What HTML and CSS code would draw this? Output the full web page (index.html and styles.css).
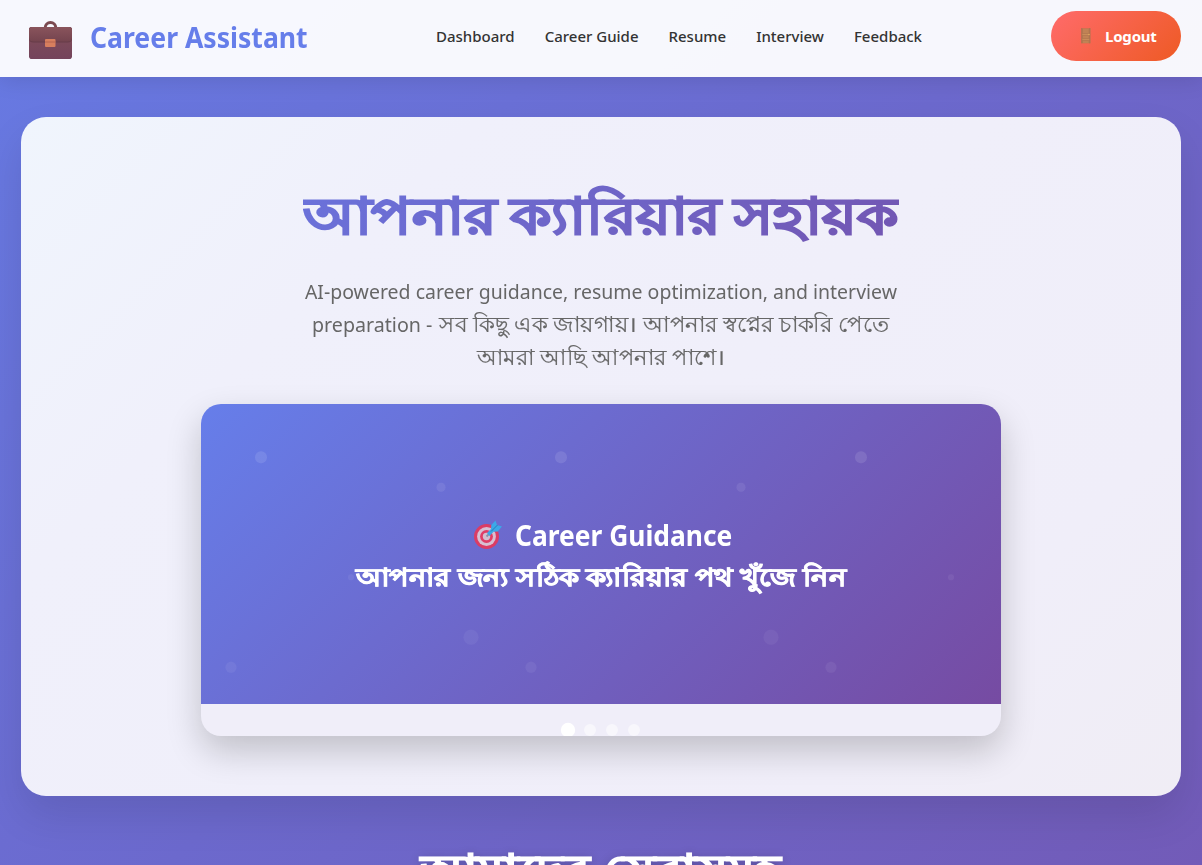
FILE: index.html
```html
<!DOCTYPE html>
<html lang="bn">
<head>
<meta charset="utf-8">
<title>Career Assistant</title>
<link rel="stylesheet" href="styles.css">
</head>
<body>
<div class="page">
  <header class="navbar">
    <div class="brand">
      <svg class="brand-icon" width="44" height="40" viewBox="0 0 44 40">
        <defs>
          <linearGradient id="flap" x1="0" y1="0" x2="0" y2="1"><stop offset="0" stop-color="#8a545c"/><stop offset="1" stop-color="#74444f"/></linearGradient>
          <linearGradient id="case" x1="0" y1="0" x2="0" y2="1"><stop offset="0" stop-color="#824e58"/><stop offset="1" stop-color="#74445c"/></linearGradient>
        </defs>
        <path d="M16.200 9V7.800a5.300 5.300 0 0 1 10.600 0V9" fill="none" stroke="#7b4a50" stroke-width="3"/>
        <rect x="0" y="7" width="43" height="32" rx="2.800" fill="url(#case)"/>
        <path d="M0 10a3 3 0 0 1 3-3h37a3 3 0 0 1 3 3v8q0 4.500-4.500 4.500h-34Q0 22.500 0 18z" fill="#673c49"/>
        <path d="M0 10a3 3 0 0 1 3-3h37a3 3 0 0 1 3 3v7q0 4.500-4.500 4.500h-34Q0 21.500 0 17z" fill="url(#flap)"/>
        <rect x="16" y="19" width="10.500" height="8" rx="1" fill="#d77f5e"/>
        <path d="M16 22h10.500" stroke="#b7654e" stroke-width="1"/>
      </svg>
      <span class="brand-name">Career Assistant</span>
    </div>
    <nav class="links">
      <a class="link">Dashboard</a><a class="link">Career Guide</a><a class="link">Resume</a><a class="link">Interview</a><a class="link">Feedback</a>
    </nav>
    <button class="logout">
      <svg width="10" height="16" viewBox="0 0 10 16"><rect x=".5" y=".3" width="8.800" height="15" fill="#b77a50"/><path d="M2 2h5.500M2 4h5.500M1 6.500h8M2 9h5.500M1 11.500h8M2 14h5.500" stroke="#d1935f" stroke-width=".7"/><path d="M.8 0v15.300M8.800 0v15.300" stroke="#a97350"/><circle cx="8" cy="6.500" r=".7" fill="#e6b05f"/></svg>
      <span>Logout</span>
    </button>
  </header>
  <main class="main">
    <section class="hero">
      <h1 class="title">আপনার ক্যারিয়ার সহায়ক</h1>
      <div class="intro">
        <div class="latin">AI-powered career guidance, resume optimization, and interview</div>
        <div class="mixed"><span class="mixed-latin">preparation -</span><span class="mixed-bangla">সব কিছু এক জায়গায়। আপনার স্বপ্নের চাকরি পেতে</span></div>
        <div class="bangla">আমরা আছি আপনার পাশে।</div>
      </div>
      <div class="slider">
        <div class="slide">
          <svg class="pattern" width="800" height="300">
            <defs>
              <pattern id="spots" width="300" height="300" patternUnits="userSpaceOnUse">
                <g fill="#fff"><circle cx="60" cy="53.300" r="6" fill-opacity=".1"/><circle cx="240" cy="83.300" r="4.500" fill-opacity=".08"/><circle cx="150" cy="173.300" r="3" fill-opacity=".06"/><circle cx="270" cy="233.300" r="7.500" fill-opacity=".05"/><circle cx="30" cy="263.300" r="5.500" fill-opacity=".06"/></g>
              </pattern>
            </defs>
            <rect width="800" height="300" fill="url(#spots)"/>
          </svg>
          <div class="caption">
            <div class="cap-en">
              <svg width="30" height="30" viewBox="0 0 30 30">
                <circle cx="13.500" cy="16.500" r="12.500" fill="#db3c65"/><circle cx="13.500" cy="16.500" r="9.400" fill="#d8bfd2"/><circle cx="13.500" cy="16.500" r="6.400" fill="#df3e66"/><circle cx="13.500" cy="16.500" r="3.700" fill="#d3bfd0"/>
                <path d="M13.500 16.500l5-5" stroke="#8a91a8" stroke-width="1.800"/>
                <path d="M14 13l4-4 .3-4L22.500.5l1.500 4.500 5 1.500-4.300 5-4.200.3L16.500 16z" fill="#3ca8e8"/><path d="M18 11.500l6.500-6.500" stroke="#277eb9" stroke-width="1"/>
              </svg>
              <span class="cap-text">Career Guidance</span>
            </div>
            <div class="cap-bn">আপনার জন্য সঠিক ক্যারিয়ার পথ খুঁজে নিন</div>
          </div>
        </div>
        <div class="dots"><i class="dot on"></i><i class="dot"></i><i class="dot"></i><i class="dot"></i></div>
      </div>
    </section>
    <h2 class="services">আমাদের সেবাসমূহ</h2>
  </main>
</div>
</body>
</html>
```
FILE: styles.css
```css
* { box-sizing: border-box; }
html { overflow: hidden; }
body { margin: 0; height: 865px; overflow: hidden; font-family: "Noto Sans", "Open Sans", sans-serif; }
.page { height: 865px; overflow: hidden; background: linear-gradient(135deg, #677ae3 0%, #6c69cd 50%, #725bb8 100%); }
.navbar { height: 77px; position: relative; display: flex; align-items: center; justify-content: space-between; padding: 0 21px 4px 29px; background: rgba(255,255,255,.95); box-shadow: 0 4px 20px rgba(0,0,0,.1); }
.brand { width: 379px; display: flex; align-items: center; gap: 17px; color: #667eea; font-size: 28px; font-weight: 700; }
.brand-icon { margin-top: 6px; flex: none; }
.brand-name { white-space: nowrap; line-height: 40px; transform: scaleX(.95); transform-origin: left; }
.links { display: flex; gap: 30px; flex: 1; padding-left: 28px; margin-top: -2px; }
.link { font-size: 15px; font-weight: 500; color: #333; white-space: nowrap; }
.logout { width: 130px; height: 50px; border: 0; border-radius: 25px; background: linear-gradient(135deg, #ff6b6b, #ee5a24); color: #fff; font: 700 15px "Noto Sans", sans-serif; display: flex; align-items: center; padding: 0 0 0 30px; gap: 14px; margin-top: -1px; }
.logout span { letter-spacing: -.2px; }
.main { padding: 40px 21px 0; }
.hero { height: 679px; border-radius: 25px; background: linear-gradient(135deg, #f0f5fd, #f0f0fb 25%, #f0eef9 80%, #f0edf5); box-shadow: 0 20px 40px rgba(0,0,0,.1); padding-top: 56px; display: flex; flex-direction: column; align-items: center; }
.title { margin: 0; height: 84px; font-size: 51px; line-height: 83px; font-weight: 700; white-space: nowrap; color: transparent; -webkit-text-stroke: 1.6px transparent; background: linear-gradient(135deg, #6a73dc, #7355b1); background-clip: text; -webkit-background-clip: text; transform: scaleX(1.16); word-spacing: -2px; }
.intro { margin-top: 18px; height: 99px; font-size: 20.8px; line-height: 33px; color: #666; text-align: center; white-space: nowrap; display: flex; flex-direction: column; align-items: center; }
.latin { transform: scaleX(.937); }
.mixed { display: flex; gap: 5px; width: 577px; height: 33px; }
.mixed-latin { width: 122px; text-align: left; transform: scaleX(.945); transform-origin: left; }
.mixed-bangla { width: 450px; text-align: left; transform: scaleX(1.038); transform-origin: left; }
.bangla { height: 33px; transform: scaleX(1.028); }
.mixed-bangla, .bangla { font-size: 22px; line-height: 31px; -webkit-text-stroke: .2px #666; }
.slider { margin-top: 30px; width: 800px; height: 332px; border-radius: 20px; overflow: hidden; box-shadow: 0 15px 35px rgba(0,0,0,.2); background: #f0eef9; }
.slide { position: relative; height: 300px; display: flex; align-items: center; justify-content: center; background: linear-gradient(135deg, #667eea, #764ba2); }
.pattern { position: absolute; inset: 0; }
.caption { position: relative; color: #fff; font-size: 28.8px; font-weight: 700; line-height: 41px; text-align: center; white-space: nowrap; margin-top: 2px; }
.cap-en { display: flex; align-items: center; gap: 12px; width: 256px; margin: 0 auto; }
.cap-en svg { flex: none; margin-top: 1px; }
.cap-text { transform: scaleX(.916); transform-origin: left; }
.cap-bn { font-size: 25.4px; line-height: 42px; transform: scaleX(1.152); -webkit-text-stroke: .8px #fff; }
.dots { height: 32px; overflow: hidden; display: flex; justify-content: center; align-items: flex-start; gap: 10px; padding-top: 20px; }
.dot { width: 12px; height: 12px; border-radius: 50%; background: rgba(255,255,255,.5); }
.dot.on { background: #fff; transform: scale(1.2); }
.services { margin: 42px 0 0; text-align: center; color: #fff; font-size: 41px; line-height: 60px; font-weight: 700; -webkit-text-stroke: 1.5px #fff; text-shadow: 0 2px 10px rgba(0,0,0,.3); transform: scaleX(1.18); }
```
